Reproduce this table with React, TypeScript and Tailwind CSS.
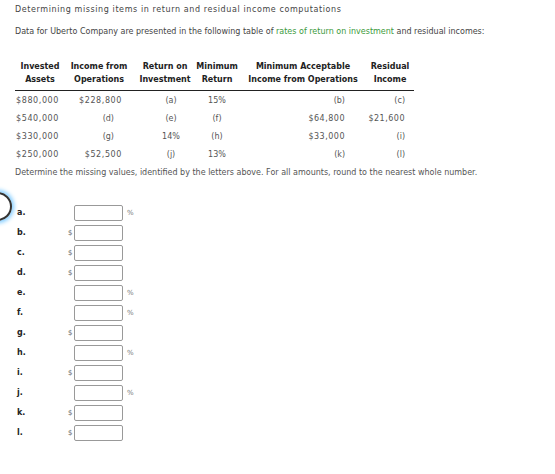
import React from 'react';

const cols = [
  { w: 'w-[50px]', head: ['Invested', 'Assets'] },
  { w: 'w-[68px]', head: ['Income from', 'Operations'] },
  { w: 'w-[64px]', head: ['Return on', 'Investment'] },
  { w: 'w-[40px]', head: ['Minimum', 'Return'] },
  { w: 'w-[132px]', head: ['Minimum Acceptable', 'Income from Operations'] },
  { w: 'w-[42px]', head: ['Residual', 'Income'] },
];

const rows = [
  ['$880,000', '$228,800', '(a)', '15%', '(b)', '(c)'],
  ['$540,000', '(d)', '(e)', '(f)', '$64,800', '$21,600'],
  ['$330,000', '(g)', '14%', '(h)', '$33,000', '(i)'],
  ['$250,000', '$52,500', '(j)', '13%', '(k)', '(l)'],
];

const answers: { letter: string; unit: '$' | '%' }[] = [
  { letter: 'a', unit: '%' },
  { letter: 'b', unit: '$' },
  { letter: 'c', unit: '$' },
  { letter: 'd', unit: '$' },
  { letter: 'e', unit: '%' },
  { letter: 'f', unit: '%' },
  { letter: 'g', unit: '$' },
  { letter: 'h', unit: '%' },
  { letter: 'i', unit: '$' },
  { letter: 'j', unit: '%' },
  { letter: 'k', unit: '$' },
  { letter: 'l', unit: '$' },
];

function DataRow({ r }: { r: string[] }) {
  const isLetter = (s: string) => s.startsWith('(');
  return (
    <div className="flex h-[18px] items-center whitespace-nowrap">
      <div className="w-[50px] pl-[1px] tracking-[0.6px]">{r[0]}</div>
      <div className={`w-[68px] text-right ${isLetter(r[1]) ? 'pr-[19px]' : 'pr-[11px] tracking-[0.6px]'}`}>{r[1]}</div>
      <div className="w-[76px] flex justify-center">{r[2]}</div>
      <div className="w-[16px] flex justify-center">{r[3]}</div>
      <div className={`w-[140px] text-right pr-[20px] ${isLetter(r[4]) ? '' : 'tracking-[0.5px]'}`}>{r[4]}</div>
      <div className={`w-[40px] text-right ${isLetter(r[5]) ? '' : 'tracking-[0.5px]'}`}>{r[5]}</div>
    </div>
  );
}

export default function App() {
  return (
    <div className="relative w-[555px] h-[474px] bg-white overflow-hidden px-[15px] pt-[4px] text-[8px] leading-[12px] text-[#444] font-['DejaVu_Sans',sans-serif]">
      <p className="tracking-[0.6px]">Determining missing items in return and residual income computations</p>
      <p className="mt-[10px]">
        Data for Uberto Company are presented in the following table of{' '}
        <span className="text-[#3c9a3c]">rates of return on investment</span> and residual incomes:
      </p>

      <div className="mt-[22px] text-[#555]">
        <div className="flex font-bold text-[#222] leading-[13px] whitespace-nowrap">
          {cols.map((c) => (
            <div key={c.head[0]} className={`${c.w} flex flex-col items-center`}>
              <span>{c.head[0]}</span>
              <span>{c.head[1]}</span>
            </div>
          ))}
        </div>
        <div className="mt-[4px] w-[399px] h-[1px] bg-[#222]" />
        <div className="mt-[1px]">
          {rows.map((r, i) => (
            <DataRow key={i} r={r} />
          ))}
        </div>
      </div>

      <p className="mt-[3px] text-[#555]">
        Determine the missing values, identified by the letters above. For all amounts, round to the nearest whole number.
      </p>

      <div className="mt-[26px] flex flex-col gap-[4px]">
        {answers.map((a) => (
          <div key={a.letter} className="flex items-center h-[16px]">
            <span className="w-[53px] pl-[2px] font-bold text-[#222]">{a.letter}.</span>
            <span className="w-[6px] text-[#666] text-[7px]">{a.unit === '$' ? '$' : ''}</span>
            <input
              type="text"
              className="w-[49px] h-[16px] border border-[#999] rounded-[2px] bg-white"
            />
            <span className="ml-[4px] text-[#777] text-[7px]">{a.unit === '%' ? '%' : ''}</span>
          </div>
        ))}
      </div>

      <div className="absolute left-[-17px] top-[192px] w-[29px] h-[29px] rounded-full border-2 border-[#333] shadow-[0_0_4px_2px_#7ecbff]" />
    </div>
  );
}
